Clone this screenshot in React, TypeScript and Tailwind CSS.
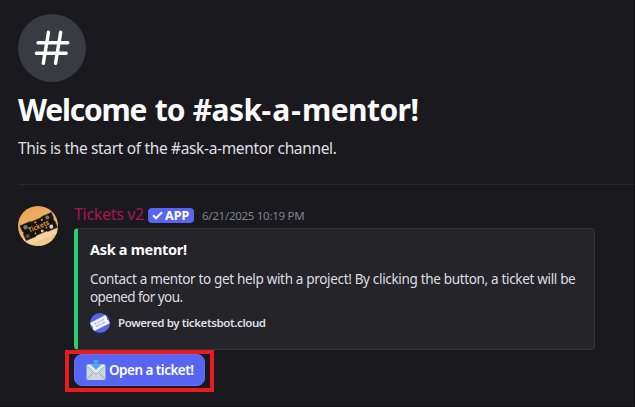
import React from "react";

function HashIcon() {
  return (
    <svg width="36" height="36" viewBox="0 0 36 36" fill="none" stroke="#fff" strokeWidth="3.4" strokeLinecap="round">
      <path d="M14.5 2.2 L9.3 33.4 M26.7 2.2 L21.5 33.4 M4 12.7 H33.8 M2.4 23.3 H32.2" />
    </svg>
  );
}

function TicketAvatar() {
  return (
    <svg width="40" height="40" viewBox="0 0 40 40" className="mt-[3px] shrink-0">
      <defs>
        <clipPath id="avatar">
          <circle cx="20" cy="20" r="20" />
        </clipPath>
        <linearGradient id="wood" x1="0" y1="0" x2="0.5" y2="1">
          <stop offset="0" stopColor="#eba452" />
          <stop offset="0.6" stopColor="#eeb168" />
          <stop offset="1" stopColor="#f3c995" />
        </linearGradient>
      </defs>
      <g clipPath="url(#avatar)">
        <rect width="40" height="40" fill="url(#wood)" />
        <path d="M3 34 L37 22 L40 27 L12 39 Z" fill="#f7d3a2" />
        <g transform="rotate(-23 20.5 20)">
          <path d="M3.5 12.6 H14 l1 0.8 h11 l1 -0.8 H37.5 V18 l-0.8 2 L37.5 22 V28.6 H27 l-1 -0.8 H15 L14 28.6 H3.5 V22 l0.8 -2 L3.5 18 Z" fill="#15120f" stroke="#4a3420" strokeWidth="0.7" />
          <text x="9.5" y="22.8" fontSize="7" fontWeight="600" fill="#e9a447" fontFamily="Noto Sans, sans-serif" textLength="22" lengthAdjust="spacingAndGlyphs">Tickets</text>
          <circle cx="8" cy="16" r="2.2" fill="#77777b" />
          <circle cx="32" cy="25.6" r="2" fill="#d7d5d1" />
          <circle cx="22" cy="26" r="1.5" fill="#c6c2bc" />
          <circle cx="32" cy="15.6" r="2" fill="#77777b" />
          <circle cx="6.7" cy="25" r="2" fill="#56565b" />
          <path d="M18 15.3h2M25 15.6h2M14 25.6h1.5M26.4 24.6h1.6" stroke="#e99b38" strokeWidth="1.6" />
        </g>
      </g>
    </svg>
  );
}

function FooterLogo() {
  return (
    <svg width="20" height="20" viewBox="0 0 20 20" className="shrink-0">
      <circle cx="10" cy="10" r="10" fill="#5664ee" />
      <g transform="rotate(-27 10 10)">
        <path d="M1.2 5.4 H18.6 V8.9 a1.2 1.2 0 0 0 0 2.2 V14.6 H1.2 V11.1 a1.2 1.2 0 0 0 0 -2.2 Z" fill="#f4f5ff" />
        <path d="M4.5 8.5h2.2M7.6 8.5h2.4M11 8.5h1.6M13.4 8.5h1.8M4.7 11.4h3M8.6 11.4h2M11.5 11.4h3.4" stroke="#a3abf8" strokeWidth="1.3" />
      </g>
    </svg>
  );
}

function EnvelopeIcon() {
  return (
    <svg width="20" height="20" viewBox="0 0 20 20" className="shrink-0">
      <rect x="0.5" y="4.5" width="19" height="15.5" rx="1.6" fill="#ccd6dd" />
      <path d="M1 19 L7.7 12.2 M19 19 L12.3 12.2" stroke="#99aab5" strokeWidth="1" />
      <path d="M1.4 4.5 H18.6 L19.4 6 L11.4 13.6 Q10 14.8 8.6 13.6 L0.6 6 Z" fill="#e1e8ed" />
      <path d="M0.7 5.6 L8.6 13.5 Q10 14.8 11.4 13.5 L19.3 5.6" fill="none" stroke="#99aab5" strokeWidth="1" />
      <path d="M7.6 0 H12.4 V4.2 H15.6 L10 9.8 L4.4 4.2 H7.6 Z" fill="#4ba6ee" />
    </svg>
  );
}

export default function App() {
  return (
    <main className="h-[407px] w-[635px] overflow-hidden border-r border-b border-[#101012] bg-[#1a1a1e] pt-[14px] pl-[18px] font-['Noto_Sans','Open_Sans',sans-serif] whitespace-nowrap">
      <header className="flex h-[171px] flex-col border-b border-[#29292d]">
        <div className="flex size-[68px] shrink-0 items-center justify-center rounded-full bg-[#3a3a42]">
          <HashIcon />
        </div>
        <h1 className="mt-2 text-[30px] leading-10 font-bold text-[#fbfbfb]">
          <span className="tracking-[-1.2px] [word-spacing:2px]">Welcome to </span>
          <span className="tracking-[-0.6px]">#ask</span>
          <span className="tracking-[1.1px]">-a-</span>
          <span className="tracking-[-0.55px]">mentor!</span>
        </h1>
        <p className="mt-2 text-[15.5px] leading-5 tracking-[-0.34px] text-[#dfdfe2]">This is the start of the #ask-a-mentor channel.</p>
      </header>

      <article className="mt-[18px] flex gap-4">
        <TicketAvatar />
        <div>
          <div className="flex h-[25px] items-start">
            <span className="w-[74px] text-[16px] leading-[23px] tracking-[-0.32px] text-[#a5154f]">Tickets v2</span>
            <span className="mt-[5px] flex h-[15px] w-[46px] items-center gap-0.5 rounded-[4px] bg-[#5865f2] pl-1 text-white">
              <svg width="11" height="9" viewBox="0 0 11 9" fill="none" stroke="currentColor" strokeWidth="2">
                <path d="M1 4.3 L4 7.3 L10 1.2" />
              </svg>
              <span className="text-[12.5px] leading-[15px] font-bold">APP</span>
            </span>
            <time className="ml-2 text-[11.5px] leading-[26px] tracking-[-0.28px] text-[#818188]">6/21/2025 10:19 PM</time>
          </div>

          <section className="h-[122px] w-[521px] rounded-[4px] border border-l-4 border-[#333338] border-l-[#2ecc71] bg-[#242429] pt-[9px] pl-3">
            <h2 className="text-[14.5px] leading-[22px] font-bold tracking-[-0.3px] text-[#fbfbfb]">Ask a mentor!</h2>
            <p className="mt-[10px] text-[13.5px] leading-[18px] tracking-[-0.33px] text-[#dfdfe2]">
              Contact a mentor to get help with a project! By clicking the button, a ticket will be
              <br />
              <span className="tracking-[-0.55px]">opened for you.</span>
            </p>
            <footer className="mt-[7px] flex items-center gap-2">
              <FooterLogo />
              <span className="text-[11.5px] leading-4 font-semibold tracking-[-0.4px] text-[#dfdfe2]">Powered by ticketsbot.cloud</span>
            </footer>
          </section>

          <div className="relative mt-1 w-[131px]">
            <button className="flex h-8 w-[131px] items-center gap-[3px] rounded-lg border border-[#6571f3] bg-[#5865f2] pl-[11px] text-white">
              <EnvelopeIcon />
              <span className="text-[13.5px] leading-[18px] font-semibold tracking-[-0.52px]">Open a ticket!</span>
            </button>
            <span className="pointer-events-none absolute -top-1 -left-[9px] h-[42px] w-[149px] border-4 border-[#e91b1d]" />
          </div>
        </div>
      </article>
    </main>
  );
}
